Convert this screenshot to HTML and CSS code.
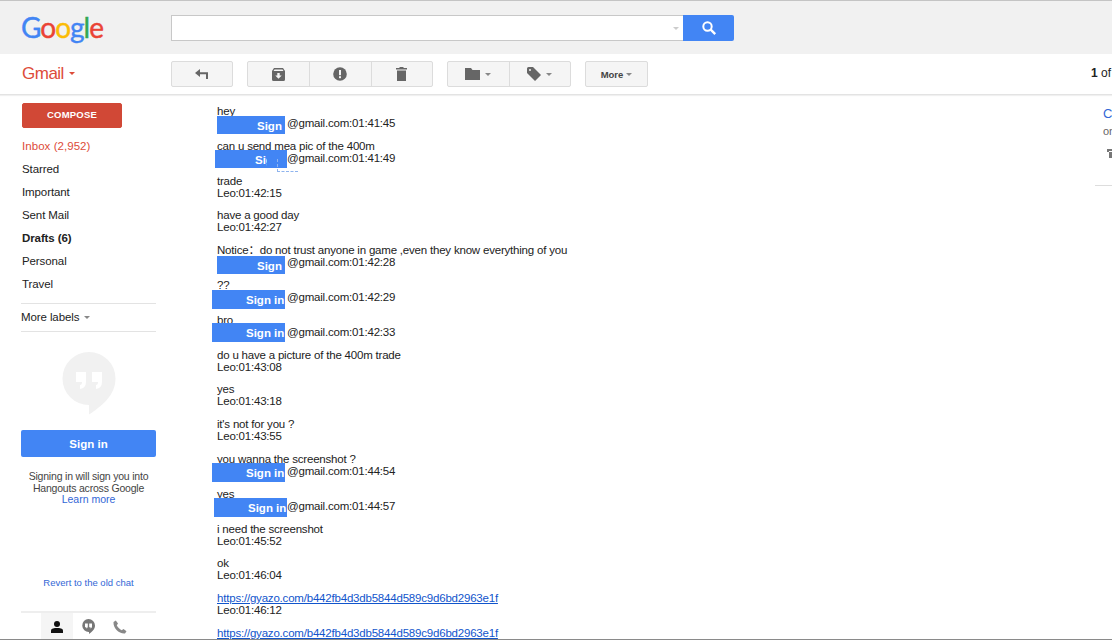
FILE: index.html
```html
<!DOCTYPE html>
<html lang="en">
<head>
<meta charset="utf-8">
<title>Gmail</title>
<link rel="stylesheet" href="styles.css">
</head>
<body>
<div class="page">
  <header class="masthead">
    <div class="logo"><span class="g-blue">G</span><span class="g-red">o</span><span class="g-yellow">o</span><span class="g-blue">g</span><span class="g-green">l</span><span class="g-red">e</span></div>
    <div class="search">
      <div class="search-box"><span class="caret caret-light"></span></div>
      <div class="search-btn">
        <svg width="16" height="16" viewBox="0 0 16 16"><circle cx="6.5" cy="6.5" r="4.2" fill="none" stroke="#fff" stroke-width="2"/><path d="M9.7 9.7 14.2 14.2" stroke="#fff" stroke-width="2.4"/></svg>
      </div>
    </div>
  </header>
  <nav class="toolbar">
    <div class="brand">Gmail<span class="caret caret-red"></span></div>
    <div class="btn-group btn-reply">
      <div class="btn">
        <svg width="14" height="10" viewBox="0 0 14 10"><path d="M5 0 0 4l5 4V5.2h6V10h2V3.2H5z" fill="#666"/></svg>
      </div>
    </div>
    <div class="btn-group btn-three">
      <div class="btn">
        <svg width="13" height="13" viewBox="0 0 13 13"><path d="M2 0h9l2 3v8.500a1.500 1.500 0 0 1-1.500 1.500h-10A1.500 1.500 0 0 1 0 11.500V3zM1.500 3h10l-1-1.500h-8z" fill="#666" fill-rule="evenodd"/><path d="M5.300 5h2.400v2.500h2L6.500 10.800 3.300 7.500h2z" fill="#f5f5f5"/></svg>
      </div>
      <div class="btn">
        <svg width="14" height="14" viewBox="0 0 14 14"><circle cx="7" cy="7" r="6.800" fill="#666"/><rect x="6" y="3" width="2" height="5.200" fill="#f5f5f5"/><rect x="6" y="9.200" width="2" height="2" fill="#f5f5f5"/></svg>
      </div>
      <div class="btn">
        <svg width="11" height="14" viewBox="0 0 11 14"><path d="M3.500 0h4v1H11v1.500H0V1h3.500zM1 3.500h9V14H1z" fill="#666"/></svg>
      </div>
    </div>
    <div class="btn-group">
      <div class="btn">
        <svg width="15" height="12" viewBox="0 0 15 12"><path d="M0 0h6l1.500 2H15v10H0z" fill="#666"/></svg><span class="caret caret-gray"></span>
      </div>
      <div class="btn">
        <svg width="14" height="14" viewBox="0 0 14 14"><path d="M0 1.500A1.500 1.500 0 0 1 1.500 0H6l8 8-6 6-8-8zM3 2a1 1 0 1 0 0 2 1 1 0 0 0 0-2z" fill="#666" fill-rule="evenodd"/></svg><span class="caret caret-gray"></span>
      </div>
    </div>
    <div class="btn-group">
      <div class="btn btn-more">More<span class="caret caret-gray caret-more"></span></div>
    </div>
    <div class="pager"><b>1</b> of 2,952</div>
  </nav>
  <div class="body">
    <aside class="sidebar">
      <div class="compose">COMPOSE</div>
      <ul class="labels">
        <li class="label label-inbox">Inbox (2,952)</li>
        <li class="label">Starred</li>
        <li class="label">Important</li>
        <li class="label">Sent Mail</li>
        <li class="label label-bold">Drafts (6)</li>
        <li class="label">Personal</li>
        <li class="label">Travel</li>
      </ul>
      <div class="more-labels">More labels<span class="caret caret-gray caret-labels"></span></div>
      <svg class="hangouts" width="54" height="63" viewBox="0 0 54 63"><path d="M27 0a26.500 26.500 0 0 1 26.500 26.500C53.500 43 40 54 27 62.500V53A26.500 26.500 0 0 1 27 0z" fill="#f1f1f1"/><path d="M14 20h10v10q0 6-6 7v-4q2 0 2-3h-6zM30 20h10v10q0 6-6 7v-4q2 0 2-3h-6z" fill="#fff"/></svg>
      <div class="signin">Sign in</div>
      <p class="hint">Signing in will sign you into<br>Hangouts across Google<br><a class="hint-link">Learn more</a></p>
      <a class="revert">Revert to the old chat</a>
      <div class="tabs">
        <div class="tab tab-active">
          <svg width="12" height="12" viewBox="0 0 12 12"><circle cx="6" cy="3" r="3" fill="#111"/><path d="M0 12V9.500C0 7.500 3.500 7 6 7s6 .5 6 2.500V12z" fill="#111"/></svg>
        </div>
        <div class="tab">
          <svg width="13" height="15" viewBox="0 0 13 15"><path d="M6.500 0a6.500 6.500 0 0 1 6.500 6.500c0 4-3.500 6.500-6 8.500v-2a6.500 6.500 0 0 1-.5-13z" fill="#777"/><path d="M3 4.500h2.800v3q0 1.500-1.500 2V8.200H3zM7.200 4.500H10v3q0 1.500-1.500 2V8.200H7.200z" fill="#fff"/></svg>
        </div>
        <div class="tab">
          <svg width="14" height="14" viewBox="0 0 14 14"><path d="M2.800.5 5 3.500 3.800 5.300c.8 2 2.800 4 4.900 4.900L10.500 9l3 2.200-1.500 2.300C6 14 0 8 .5 2z" fill="#888"/></svg>
        </div>
      </div>
    </aside>
    <main class="thread">
      <div class="msg">hey<br><span class="from">@gmail.com:01:41:45</span><div class="cover cover-a"><span class="cover-text">Sign in</span></div></div>
      <div class="msg">can u send mea pic of the 400m<br><span class="from">@gmail.com:01:41:49</span><div class="cover cover-b"><span class="cover-text cover-cut">Sign in</span></div><div class="marker"></div></div>
      <div class="msg">trade<br>Leo:01:42:15</div>
      <div class="msg">have a good day<br>Leo:01:42:27</div>
      <div class="msg">Notice：do not trust anyone in game ,even they know everything of you<br><span class="from">@gmail.com:01:42:28</span><div class="cover cover-c"><span class="cover-text">Sign in</span></div></div>
      <div class="msg">??<br><span class="from">@gmail.com:01:42:29</span><div class="cover cover-d"><span class="cover-text">Sign in</span></div></div>
      <div class="msg">bro<br><span class="from">@gmail.com:01:42:33</span><div class="cover cover-e"><span class="cover-text">Sign in</span></div></div>
      <div class="msg">do u have a picture of the 400m trade<br>Leo:01:43:08</div>
      <div class="msg">yes<br>Leo:01:43:18</div>
      <div class="msg">it's not for you ?<br>Leo:01:43:55</div>
      <div class="msg">you wanna the screenshot ?<br><span class="from">@gmail.com:01:44:54</span><div class="cover cover-f"><span class="cover-text">Sign in</span></div></div>
      <div class="msg">yes<br><span class="from">@gmail.com:01:44:57</span><div class="cover cover-g"><span class="cover-text">Sign in</span></div></div>
      <div class="msg">i need the screenshot<br>Leo:01:45:52</div>
      <div class="msg">ok<br>Leo:01:46:04</div>
      <div class="msg"><a class="link">https://gyazo.com/b442fb4d3db5844d589c9d6bd2963e1f</a><br>Leo:01:46:12</div>
      <div class="msg"><a class="link">https://gyazo.com/b442fb4d3db5844d589c9d6bd2963e1f</a><br>Leo:01:46:20</div>
    </main>
    <aside class="side-panel">
      <div class="side-name">Contact</div>
      <div class="side-sub">on Hangouts</div>
      <svg class="side-icon" width="12" height="9" viewBox="0 0 12 9"><path d="M0 0h12v2H2v1h10v6H2V3H0z" fill="#777"/></svg>
      <div class="side-rule"></div>
    </aside>
  </div>
</div>
</body>
</html>
```
FILE: styles.css
```css
* { box-sizing: border-box; }
html, body { margin: 0; height: 100%; }
body { font-family: "Liberation Sans", "Noto Sans CJK SC", Arial, sans-serif; font-size: 12px; color: #222; background: #fff; overflow: hidden; }
.page { height: 640px; display: flex; flex-direction: column; overflow: hidden; border-top: 1px solid #c4c4c4; border-bottom: 1px solid #8a8a8a; }
.masthead { height: 53px; flex: none; background: #f1f1f1; display: flex; align-items: flex-start; }
.logo { width: 171px; padding: 6px 0 0 21px; font-family: Lato, sans-serif; font-size: 28px; font-weight: 400; line-height: 40px; letter-spacing: -1px; -webkit-text-stroke: .4px; }
.g-blue { color: #4285f4; }
.g-red { color: #ea4335; }
.g-yellow { color: #fbbc05; }
.g-green { color: #34a853; }
.search { display: flex; margin-top: 14px; height: 26px; }
.search-box { width: 512px; background: #fff; border: 1px solid #c8c8c8; border-right: 0; display: flex; align-items: center; justify-content: flex-end; padding-right: 4px; }
.search-btn { width: 51px; background: #4285f4; border-radius: 0 2px 2px 0; display: flex; align-items: center; justify-content: center; }
.caret { display: inline-block; width: 0; height: 0; border: 3px solid transparent; border-bottom: 0; border-top-color: #888; }
.caret-light { border-top-color: #ccc; }
.caret-red { border-top-color: #dd4b39; margin-left: 5px; vertical-align: 4px; }
.caret-gray { border-top-color: #888; margin-left: 5px; }
.caret-more { margin-left: 3px; vertical-align: 2px; }
.caret-labels { vertical-align: 2px; }
.toolbar { height: 41px; flex: none; display: flex; align-items: flex-start; padding-top: 7px; border-bottom: 1px solid #e3e3e3; box-shadow: 0 1px 1px #f0f0f0; }
.brand { width: 171px; padding-left: 22px; font-size: 17px; line-height: 25px; letter-spacing: -.5px; color: #dd4b39; }
.btn-group { display: flex; height: 26px; margin-right: 14px; border: 1px solid #dcdcdc; border-radius: 2px; background: #f5f5f5; }
.btn { width: 61px; display: flex; align-items: center; justify-content: center; border-left: 1px solid #dcdcdc; }
.btn:first-child { border-left: 0; }
.btn-reply .btn { width: 60px; }
.btn-three .btn { width: 61.330px; }
.btn-more { font-size: 9.500px; font-weight: bold; color: #444; }
.pager { margin-left: auto; width: 21px; white-space: nowrap; overflow: hidden; line-height: 24px; font-size: 12px; }
.body { flex: 1; display: flex; min-height: 0; }
.sidebar { width: 217px; flex: none; padding: 8px 0 0 21px; font-size: 11.500px; }
.compose { width: 100px; height: 25px; margin-left: 1px; background: #d14836; border: 1px solid #d14836; border-radius: 2px; color: #fff; font-size: 9.500px; font-weight: bold; line-height: 22px; text-align: center; letter-spacing: .2px; }
.labels { list-style: none; margin: 7px 0 0; padding: 0; }
.label { height: 23px; line-height: 23px; padding-left: 1px; color: #222; letter-spacing: -.1px; }
.label-inbox { color: #dd4b39; letter-spacing: .05px; }
.label-bold { font-weight: bold; }
.more-labels { width: 135px; height: 29px; margin-top: 7px; line-height: 26px; letter-spacing: -.1px; border-top: 1px solid #e3e3e3; border-bottom: 1px solid #e3e3e3; }
.hangouts { display: block; margin: 20px 0 0 41px; }
.signin { width: 135px; height: 27px; margin-top: 15px; background: #4285f4; border-radius: 2px; color: #fff; font-weight: bold; text-align: center; line-height: 28px; }
.hint { width: 135px; margin: 14px 0 0; font-size: 10.500px; line-height: 11.500px; text-align: center; color: #444; letter-spacing: -.2px; }
.hint-link, .revert { color: #3367d6; letter-spacing: 0; }
.revert { display: block; width: 135px; margin-top: 71px; font-size: 9.500px; line-height: 12px; text-align: center; }
.tabs { width: 135px; height: 30px; margin-top: 22px; display: flex; padding-left: 20px; border-top: 2px solid #eee; }
.tab { width: 31px; display: flex; align-items: center; justify-content: center; }
.tab-active { width: 32px; background: #f5f5f5; }
.thread { flex: 1; padding-top: 10px; font-size: 11.500px; letter-spacing: -.2px; line-height: 12px; color: #222; min-width: 0; }
.msg { position: relative; height: 24px; margin-bottom: 10.800px; white-space: nowrap; }
.from { display: inline-block; padding-left: 70px; }
.cover { position: absolute; height: 18px; background: #4285f4; color: #fff; font-size: 11.500px; letter-spacing: 0; font-weight: bold; line-height: 20px; overflow: hidden; white-space: nowrap; }
.cover-text { display: inline-block; }
.cover-cut { width: 12px; overflow: hidden; vertical-align: top; }
.cover-a { left: 0; top: 11px; width: 68px; padding-left: 40px; }
.cover-b { left: -2px; top: 10.200px; width: 72px; padding-left: 40px; }
.cover-c { left: 0; top: 11.800px; width: 68px; padding-left: 40px; }
.cover-d { left: -5px; top: 11px; width: 73px; height: 19px; padding-left: 34px; }
.cover-e { left: -5px; top: 9.200px; width: 73px; height: 19px; padding-left: 34px; }
.cover-f { left: -5px; top: 10px; width: 73px; height: 19px; padding-left: 34px; }
.cover-g { left: -3px; top: 10.200px; width: 73px; height: 19px; padding-left: 34px; }
.marker { position: absolute; left: 60px; top: 19.500px; width: 21px; height: 13px; border-bottom: 1px dashed #8fb4ee; border-left: 1px dashed #8fb4ee; }
.link { color: #1155cc; text-decoration: underline; }
.side-panel { width: 17px; flex: none; padding: 12px 0 0 8px; overflow: hidden; white-space: nowrap; }
.side-name { color: #3367d6; font-size: 13px; line-height: 14px; }
.side-sub { margin-top: 3px; font-size: 11px; line-height: 14px; color: #666; }
.side-icon { display: block; margin: 11px 0 0 4px; }
.side-rule { width: 17px; height: 1px; margin: 27px 0 0 -8px; background: #ddd; }
```
